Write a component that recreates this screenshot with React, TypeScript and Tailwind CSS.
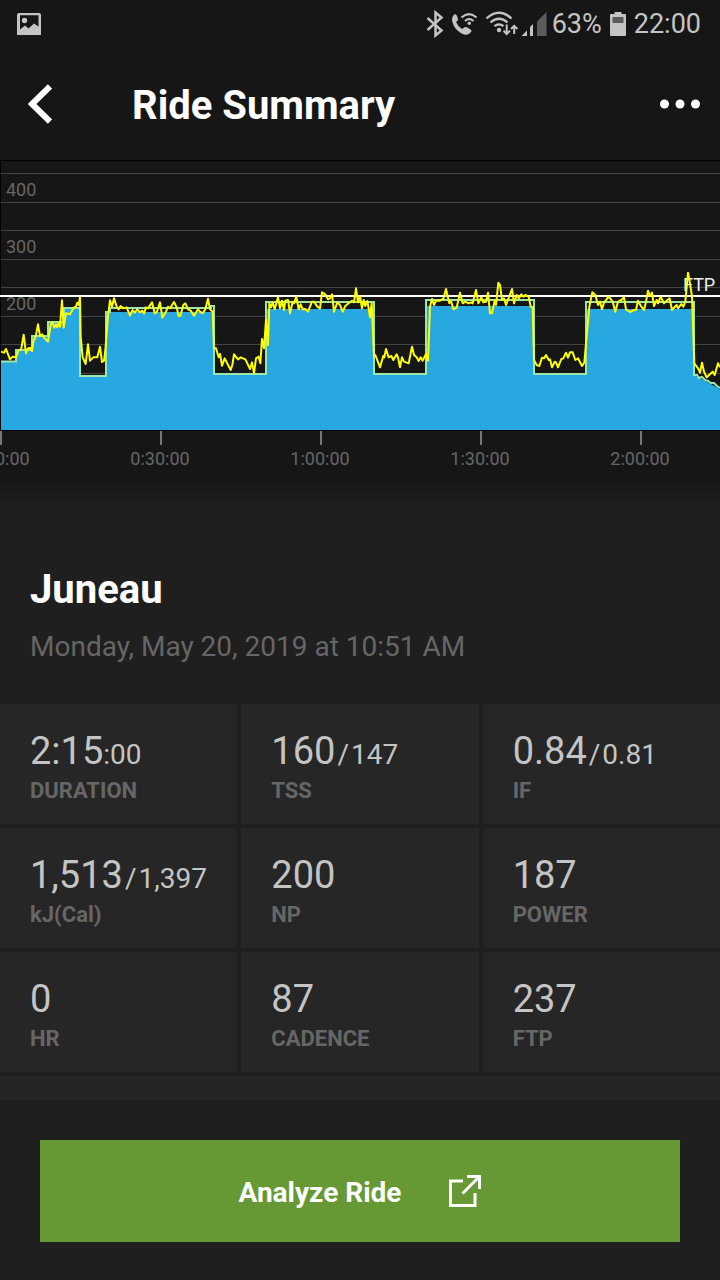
import React from "react";

type TStat = {
  label: string;
  value: string;
  seconds?: string;
  planned?: string;
};

type TSegment = {
  start: number;
  offset: number;
  points: number[][];
};

const stats: TStat[] = [
  { label: "DURATION", value: "2:15", seconds: ":00" },
  { label: "TSS", value: "160", planned: "147" },
  { label: "IF", value: "0.84", planned: "0.81" },
  { label: "kJ(Cal)", value: "1,513", planned: "1,397" },
  { label: "NP", value: "200" },
  { label: "POWER", value: "187" },
  { label: "HR", value: "0" },
  { label: "CADENCE", value: "87" },
  { label: "FTP", value: "237" },
];

const gridLines = [13, 42, 70, 99, 127, 156, 184, 213];

const powerLabels = [
  { y: 36, text: "400" },
  { y: 93, text: "300" },
  { y: 150, text: "200" },
];

const timeLabels = [
  { x: 1, text: "0:00:00" },
  { x: 161, text: "0:30:00" },
  { x: 321, text: "1:00:00" },
  { x: 481, text: "1:30:00" },
  { x: 641, text: "2:00:00" },
];

// Recorded power, three units per chart unit, each segment relative to its start
const segments: TSegment[] = [
  {
    start: 0,
    offset: 0,
    points: [
      [3, 245], [12, 248], [18, 237], [30, 268], [38, 260], [48, 262], [55, 243],
      [64, 236], [71, 194], [78, 250], [84, 235], [90, 233], [96, 243], [100, 215],
      [107, 200], [114, 163], [120, 198], [127, 193], [132, 203], [144, 215],
      [152, 165], [157, 156], [163, 173], [168, 163], [172, 172], [176, 160],
      [180, 170], [186, 91], [191, 173], [198, 130], [210, 133], [222, 112],
      [228, 110], [232, 98], [236, 105], [240, 82], [242, 200], [248, 262],
      [257, 282], [264, 223], [270, 272], [280, 262], [292, 262], [300, 230],
      [306, 276], [312, 272], [316, 240], [324, 140], [330, 91], [336, 110],
      [342, 85], [350, 110], [356, 118], [362, 108], [370, 115], [380, 112],
      [390, 137], [398, 120], [404, 128], [412, 118], [420, 127], [426, 122],
      [432, 130], [438, 112], [444, 115], [456, 97], [464, 130], [470, 127],
      [480, 97], [487, 143], [498, 125], [504, 110], [510, 115], [522, 96],
      [530, 112], [536, 138], [541, 137], [550, 105], [556, 100], [564, 118],
      [572, 122], [582, 137], [594, 118],
    ],
  },
  {
    start: 600,
    offset: 0,
    points: [
      [0, 125], [8, 130], [16, 118], [24, 86], [30, 118], [38, 125], [42, 235],
      [48, 235], [56, 262], [60, 252], [66, 287], [74, 265], [92, 300], [97, 285],
      [102, 253], [114, 268], [122, 262], [136, 268], [142, 280], [150, 297],
      [156, 277], [162, 310], [168, 265], [176, 260], [181, 280], [186, 207],
      [192, 235], [198, 150], [204, 225], [208, 100], [213, 112], [218, 97],
      [224, 118], [234, 82], [240, 115], [246, 92], [252, 120], [256, 92],
      [264, 90], [270, 130], [278, 95], [282, 100], [289, 80], [296, 118],
      [302, 103], [308, 118], [316, 117], [324, 125], [336, 95], [342, 95],
      [352, 110], [360, 115], [366, 67], [376, 73], [384, 88], [390, 85],
      [396, 73], [402, 125], [412, 97], [420, 105], [428, 125], [436, 108],
      [446, 100], [456, 92], [462, 97], [468, 55], [474, 97], [480, 78],
      [486, 115], [491, 90], [496, 108], [502, 93], [506, 115], [510, 142],
      [515, 100], [522, 260], [526, 255], [540, 292], [550, 257], [553, 262],
      [558, 237], [566, 262], [574, 258], [580, 270], [590, 253], [594, 262],
      [600, 292], [606, 262], [612, 275], [626, 280], [636, 230], [642, 255],
      [650, 262], [656, 273], [662, 262], [668, 272], [678, 252],
    ],
  },
  {
    start: 1200,
    offset: 0,
    points: [
      [84, 272], [90, 110], [96, 87], [102, 105], [108, 92], [120, 92], [130, 86],
      [138, 57], [148, 100], [153, 92], [160, 118], [170, 113], [180, 68],
      [188, 100], [196, 95], [206, 100], [213, 97], [218, 100], [228, 60],
      [235, 100], [244, 82], [250, 97], [258, 95], [264, 68], [270, 130],
      [276, 130], [284, 92], [288, 105], [295, 38], [300, 45], [306, 90],
      [312, 85], [318, 105], [336, 57], [342, 100], [350, 75], [356, 85],
      [364, 73], [370, 80], [376, 75], [386, 80], [392, 110], [398, 112],
      [402, 270], [410, 285], [418, 288], [426, 263], [432, 265], [438, 255],
      [446, 270], [450, 268], [456, 292], [464, 275], [468, 277], [474, 292],
      [484, 267], [490, 265], [498, 248], [504, 263], [510, 247], [518, 247],
      [526, 270], [534, 265], [546, 288], [553, 278], [558, 220], [568, 110],
    ],
  },
  {
    start: 1680,
    offset: -30,
    points: [
      [97, 97], [106, 105], [114, 135], [120, 125], [126, 148], [132, 128],
      [146, 110], [158, 125], [166, 155], [174, 125], [184, 120], [192, 112],
      [198, 148], [210, 156], [222, 150], [228, 150], [234, 122], [244, 140],
      [252, 150], [258, 125], [264, 92], [270, 108], [276, 98], [282, 138],
      [290, 120], [294, 130], [302, 110], [312, 130], [320, 122], [329, 115],
      [336, 150], [350, 135], [354, 145], [364, 132], [370, 140], [376, 125],
      [384, 38], [390, 70], [396, 110], [403, 310], [414, 325], [420, 338],
      [426, 308], [432, 335], [440, 352], [458, 335], [464, 345], [474, 310],
      [480, 322],
    ],
  },
];

const powerTrace = segments
  .flatMap(({ start, offset, points }) =>
    points.map(([x, y]) => `${(start + x) / 3},${110 + (offset + y) / 3}`)
  )
  .join(" ");

function StatusBar() {
  return (
    <div className="flex h-12 items-center justify-between pl-4 pr-[19px] text-[#c4c4c4]">
      <svg viewBox="0 0 26 24" className="h-6 w-[26px]" role="img" aria-label="Picture">
        <path
          fill="currentColor"
          fillRule="evenodd"
          d="M3 1h20q2 0 2 2v20H1V3q0-2 2-2zm1 2.200v14.300l5-4 3.500 3 5.500-5 4.500 3V3.200z"
        />
        <circle cx="8.500" cy="8.500" r="2.700" fill="currentColor" />
      </svg>
      <div className="flex items-center">
        <svg
          viewBox="0 0 124 28"
          className="mr-1 h-7 w-[124px]"
          role="img"
          aria-label="Bluetooth, Wi-Fi calling, Wi-Fi and signal"
        >
          <path
            d="M3.500 8L17.500 20.500 11.500 25.500V2.500L17.500 7.500 3.500 20"
            fill="none"
            stroke="currentColor"
            strokeWidth="2.500"
          />
          <path
            d="M31 4q1.500.3 2.200 2.500l.8 2.700q.2 1.400-2 2.800 2 4.500 6 7l2.500-1.700q1.200-.8 2.500 0l4 2.500q1 .9.200 1.900-2 3-5 3.100-4.500-.3-9.200-4.800Q28.500 15.500 28 9.500 28.200 5.500 31 4z"
            fill="currentColor"
          />
          <g fill="none" stroke="currentColor" strokeWidth="2">
            <path d="M37.500 7.500Q45 .8 52.500 7.500M41 11Q45 7 49.500 11" />
            <path
              d="M62.500 8.500Q75-3 87.500 8.500M66.500 12.500Q75 5 83.500 12.500M70.500 16.200Q75 12.500 79.500 16.200"
              strokeWidth="2.300"
            />
          </g>
          <circle cx="45.300" cy="13.300" r="1.700" fill="currentColor" />
          <circle cx="75" cy="20" r="2.200" fill="currentColor" />
          <g fill="none" stroke="currentColor" strokeWidth="2">
            <path d="M82.700 14.500V24M79.500 20.800L82.700 24 85.900 20.800" />
            <path d="M90.200 24V16M87 19L90.200 15.800 93.400 19" />
          </g>
          <path d="M97.500 26l5.500-5.500V26zM106 26V17l3-3v12z" fill="currentColor" />
          <path d="M113 26V11.500l9.500-9.500v24z" fill="#5c5c5c" />
        </svg>
        <span className="mr-2 text-[27px] leading-none">63%</span>
        <svg viewBox="0 0 16 24" className="mr-2 h-6 w-4" role="img" aria-label="Battery">
          <path
            fill="currentColor"
            d="M4.500 0h7v2H15q1 0 1 1v20q0 1-1 1H1q-1 0-1-1V3q0-1 1-1h3.500z"
          />
          <path fill="#5c5c5c" d="M2.500 5h11v6h-11z" />
        </svg>
        <span className="text-[27px] leading-none">22:00</span>
      </div>
    </div>
  );
}

function RideChart() {
  return (
    <svg viewBox="0 0 720 320" className="block w-full" role="img" aria-label="Ride power">
      <path d="M0.500 270.500V0.500H720" fill="none" stroke="#000000" />
      {gridLines.map((y) => (
        <path key={y} d={`M1 ${y + 0.5}H720`} stroke="#444444" />
      ))}
      <g fill="#666666" fontSize="18">
        {powerLabels.map(({ y, text }) => (
          <text key={text} x="6" y={y}>
            {text}
          </text>
        ))}
      </g>
      <path
        fill="#28a8e0"
        d="M1 270V202H16V190H32V176H48V162H64V148H80V217H106V152H214V215H266V149H374V215H426V146H534V215H586V149H694V215L720 229V270z"
      />
      <path
        fill="none"
        stroke="#9be6a8"
        strokeWidth="2"
        d="M1 201.500H16V190H32V176H48V162H64V148H80V216H106V152H110V148H211V146H214V214H266V142H374V214H426V140H534V214H586V142H694V215L697 215L699 218L702 217L705 220L708 221L711 223L714 223L717 226L720 228"
      />
      <path d="M0 136H720" stroke="#ffffff" strokeWidth="2" />
      <text x="683" y="131" fill="#eeeeee" fontSize="18">
        FTP
      </text>
      <polyline
        points={powerTrace}
        fill="none"
        stroke="#ffff00"
        strokeWidth="2"
        strokeLinejoin="round"
      />
      <path d="M0 270.500H720" stroke="#000000" />
      {timeLabels.map(({ x, text }) => (
        <g key={text}>
          <path d={`M${x} 271V285`} stroke="#777777" strokeWidth="2" />
          <text x={x - 1} y="305" fill="#666666" fontSize="18" textAnchor="middle">
            {text}
          </text>
        </g>
      ))}
    </svg>
  );
}

function StatCard({ label, value, seconds, planned }: TStat) {
  return (
    <div className="flex h-[120px] flex-col-reverse justify-end bg-[#262626] pl-[30px] pt-6">
      <dt className="text-[22px] font-bold leading-[34px] text-[#666666]">{label}</dt>
      <dd className="flex h-[46px] items-baseline whitespace-nowrap text-[38px] leading-[46px] text-[#c4c4c4]">
        {value}
        {seconds && <span className="text-[28px]">{seconds}</span>}
        {planned && (
          <span className="text-[28px]">
            <span className="px-0.5">/</span>
            {planned}
          </span>
        )}
      </dd>
    </div>
  );
}

const App: React.FC = () => {
  return (
    <div className="flex min-h-screen flex-col bg-[#1f1f1f] font-['Roboto',sans-serif]">
      <div className="bg-[#161616]">
        <StatusBar />
        <header className="flex h-28 items-center pl-7 pr-5 text-white">
          <button type="button" aria-label="Back" className="mr-20">
            <svg viewBox="0 0 24 40" className="h-10 w-6">
              <path d="M22 2.500L4 20l18 17.500" fill="none" stroke="currentColor" strokeWidth="6" />
            </svg>
          </button>
          <h1 className="flex-1 pt-1 text-[40px] font-bold leading-none">Ride Summary</h1>
          <button type="button" aria-label="More options">
            <svg viewBox="0 0 40 10" className="h-[10px] w-10" fill="currentColor">
              <circle cx="4.500" cy="5" r="4.500" />
              <circle cx="20" cy="5" r="4.500" />
              <circle cx="35.500" cy="5" r="4.500" />
            </svg>
          </button>
        </header>
        <RideChart />
      </div>
      <div className="h-6 bg-linear-to-b from-[#161616] to-[#1f1f1f]" />
      <section className="px-[30px] pb-10 pt-[60px]">
        <h2 className="text-[40px] font-bold leading-[52px] text-white">Juneau</h2>
        <p className="mt-[14px] text-[28px] leading-[34px] text-[#666666]">
          Monday, May 20, 2019 at 10:51 AM
        </p>
      </section>
      <dl className="grid grid-cols-3 gap-1">
        {stats.map((stat) => (
          <StatCard key={stat.label} {...stat} />
        ))}
      </dl>
      <div className="mt-1 h-6 bg-[#252525]" />
      <div className="px-10 pb-[38px] pt-10">
        <button
          type="button"
          className="flex h-[102px] w-full items-center justify-center gap-12 bg-[#669933] text-[28px] font-bold text-white"
        >
          <span className="pt-1">Analyze Ride</span>
          <svg viewBox="0 0 32 32" className="h-8 w-8">
            <path
              d="M14 6H1.500v24.500H26V18M13.500 18.500L30.500 1.500M18 1.500h12.500V14"
              fill="none"
              stroke="currentColor"
              strokeWidth="3"
            />
          </svg>
        </button>
      </div>
    </div>
  );
};

export default App;
